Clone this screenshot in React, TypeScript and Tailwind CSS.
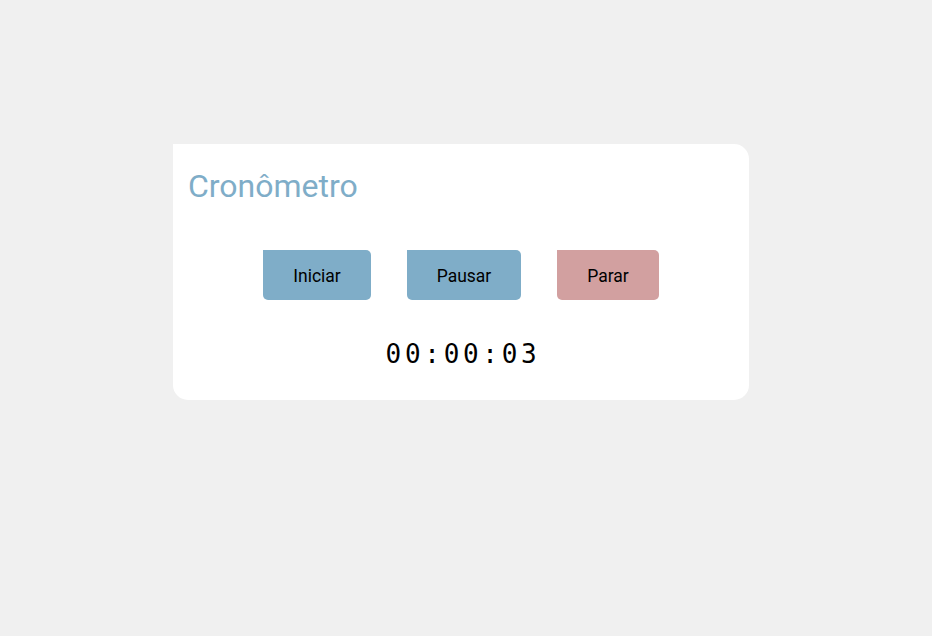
export default function App() {
  return (
    <div className="min-h-screen bg-[#f0f0f0] pl-[173px] pt-[144px]">
      <div className="w-[576px] h-[256px] bg-white rounded-[0_15px_15px_15px] pt-[23px] pl-[15px] pr-4 flex flex-col">
        <h1 className="font-['Roboto',sans-serif] text-[32px] leading-[38px] text-[#7fadc8]">Cronômetro</h1>
        <div className="mt-[45px] flex justify-center gap-[36px] font-['Roboto',sans-serif] pl-px">
          <button className="h-[50px] w-[108px] pt-[3px] bg-[#7fadc8] rounded-[0_5px_5px_5px] text-[17.5px] text-black">Iniciar</button>
          <button className="h-[50px] w-[114px] pt-[3px] bg-[#7fadc8] rounded-[0_5px_5px_5px] text-[17.5px] text-black">Pausar</button>
          <button className="h-[50px] w-[102px] pt-[3px] bg-[#d2a0a0] rounded-[0_5px_5px_5px] text-[17.5px] text-black">Parar</button>
        </div>
        <div className="mt-[39px] flex justify-center pl-[5px]">
          <span className="font-['DejaVu_Sans_Mono',monospace] text-[26px] leading-[30px] tracking-[3.7px] text-black">00:00:03</span>
        </div>
      </div>
    </div>
  );
}
